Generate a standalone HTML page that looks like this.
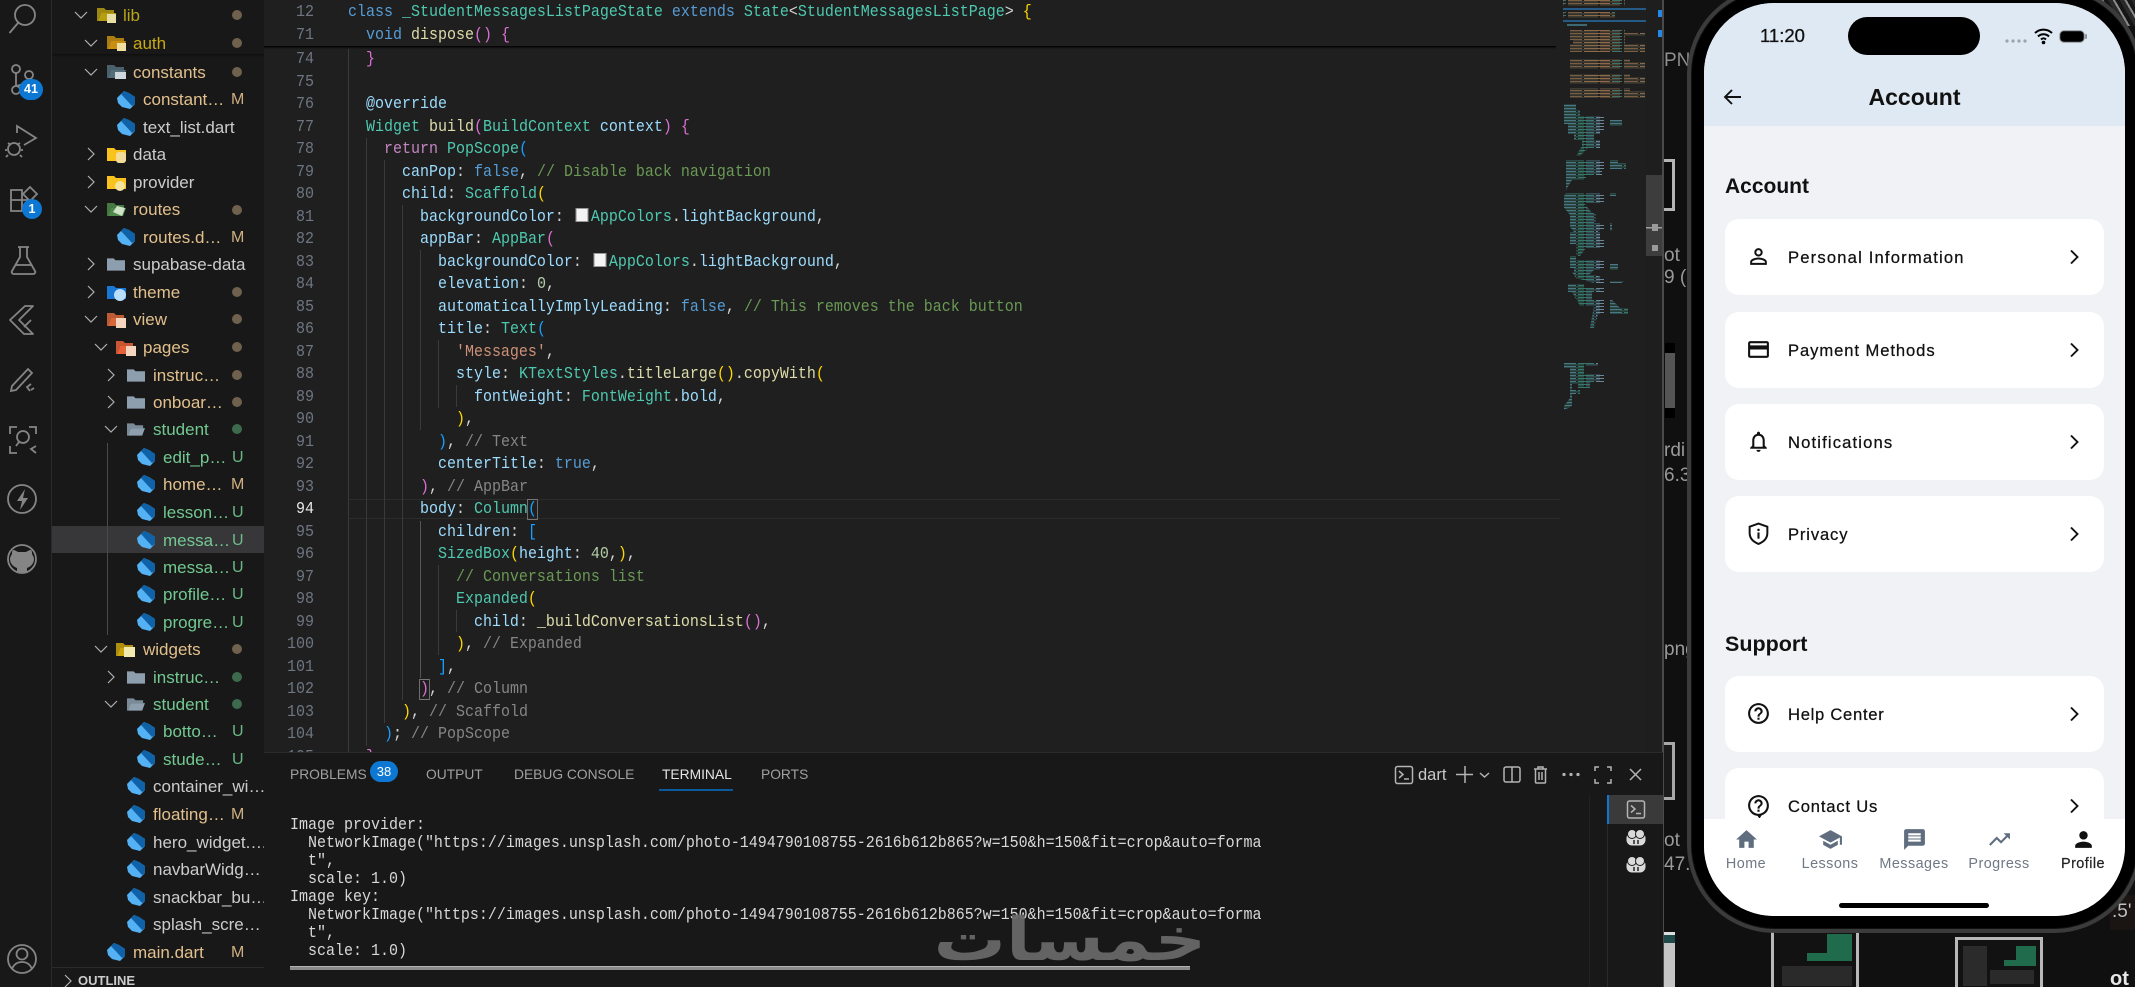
<!DOCTYPE html>
<html lang="en"><head><meta charset="utf-8"><title>Account</title>
<style>
*{box-sizing:border-box}
html,body{margin:0;padding:0;width:2135px;height:987px;overflow:hidden;background:#101010;font-family:"Liberation Sans",sans-serif}
#root{position:relative;width:2135px;height:987px;overflow:hidden;background:#101010}
.abs{position:absolute}
#side{position:absolute;left:0;top:0;width:264px;height:987px;background:#181818}
#act{position:absolute;left:0;top:0;width:52px;height:987px;background:#181818;border-right:1px solid #2a2a2a}
.t{position:absolute;font-size:17px;line-height:28px;height:28px;white-space:pre;color:#cccccc;margin-top:1px}
.y{color:#e2c08d}.g{color:#73c991}.o{color:#b9a416}
.b{position:absolute;left:231px;font-size:16px;line-height:28px;height:28px;margin-top:1px;opacity:.9}
.d{position:absolute;left:232px;width:10px;height:10px;border-radius:50%}
.dm{background:#6f614d}.du{background:#3d6a4c}
#sel{position:absolute;left:52px;top:526px;width:212px;height:27px;background:#37373a}
#ed{position:absolute;left:264px;top:0;width:1399px;height:752px;background:#1f1f1f;overflow:hidden}
.mono{font-family:"Liberation Mono",monospace;font-size:16.67px;white-space:pre;transform-origin:0 0;transform:scaleX(.9)}
.ln{position:absolute;left:0;width:50px;margin-top:1.5px;text-align:right;color:#6e7681;font-family:"Liberation Mono",monospace;font-size:16.67px;line-height:22.5px;height:22.5px;transform-origin:100% 0;transform:scaleX(.9)}
#code{position:absolute;left:84px;top:49.25px;color:#d4d4d4;line-height:22.5px;white-space:normal}
#code div{height:22.5px;white-space:pre}
.k{color:#569cd6}.c{color:#4ec9b0}.f{color:#dcdcaa}.p{color:#9cdcfe}.m{color:#6a9955}.s{color:#ce9178}.n{color:#b5cea8}.r{color:#c586c0}
.bg{color:#ffd700}.bp{color:#da70d6}.bb{color:#179fff}.dim{color:#858585}
.gd{position:absolute;width:1px;background:#3a3a3a}
.sw{display:inline-block;width:14px;height:14px;background:#f4f4f4;border:1px solid #999;margin:0 3px 0 3px;vertical-align:-1px}
#pn{position:absolute;left:264px;top:752px;width:1399px;height:235px;background:#181818;border-top:1px solid #2b2b2b}
.tab{position:absolute;top:13px;font-size:13.8px;line-height:18px;color:#a0a0a0}
#term{position:absolute;left:26px;top:64px;color:#d8d8d8;line-height:18px;white-space:normal}
#term div{height:18px;white-space:pre}
#phone{position:absolute;left:1687px;top:-14px;width:455px;height:947px;border-radius:88px;background:#000;border:4px solid #3b3b3b;box-shadow:inset 0 0 0 1px #111}
#scr{position:absolute;left:1704px;top:3px;width:421px;height:913px;border-radius:70px;background:#f0f2f6;overflow:hidden}
#hd{position:absolute;left:0;top:0;width:421px;height:123px;background:#dfe9f3}
.card{position:absolute;left:21px;width:379px;height:76px;background:#fff;border-radius:14px}
.lb{position:absolute;left:64px;top:1px;line-height:76px;font-size:16.6px;color:#111;white-space:pre;-webkit-text-stroke:.25px #111}
.ic{position:absolute;left:21px;top:25px;width:25px;height:25px;fill:#111}
.ch{position:absolute;left:344px;top:30px;width:10px;height:16px;fill:none;stroke:#111;stroke-width:1.9}
.h{position:absolute;left:21px;font-weight:bold;color:#111;line-height:30px;white-space:pre}
#nav{position:absolute;left:0;top:816px;width:421px;height:97px;background:#fff}
.ni{position:absolute;top:8px;width:25px;height:25px;fill:#5f6d7f}
.nl{position:absolute;top:35px;width:90px;text-align:center;font-size:14.4px;line-height:20px;color:#6f7884;letter-spacing:.45px}
.dw{font-size:19px;line-height:24px;color:#9a9a9a;position:absolute;white-space:pre}
.th{position:absolute;background:#121212;border:3px solid #b8b8b8}
</style></head><body><div id="root">

<!-- desktop remnants -->
<div class="dw" style="left:1664px;top:49px;color:#8f8f8f">PNG</div>
<div class="abs" style="left:1664px;top:159px;width:11px;height:52px;background:#0c0c0c;border:3px solid #b5b5b5;border-left:0"></div>
<div class="dw" style="left:1664px;top:244px">ot</div>
<div class="dw" style="left:1664px;top:266px">9 (</div>
<div class="abs" style="left:1665px;top:345px;width:10px;height:72px;background:#555"></div>
<div class="abs" style="left:1665px;top:343px;width:10px;height:10px;background:#000"></div>
<div class="abs" style="left:1665px;top:408px;width:10px;height:10px;background:#000"></div>
<div class="dw" style="left:1664px;top:439px">rdi</div>
<div class="dw" style="left:1664px;top:464px">6.3</div>
<div class="dw" style="left:1664px;top:638px">png</div>
<div class="abs" style="left:1664px;top:742px;width:11px;height:58px;background:#1a1a1a;border:3px solid #a8a8a8;border-left:0"></div>
<div class="dw" style="left:1664px;top:829px">ot</div>
<div class="dw" style="left:1664px;top:853px">47.2</div>
<div class="abs" style="left:1664px;top:932px;width:11px;height:55px;background:#c4c4c4;border-top:3px solid #ddd"></div>
<div class="abs" style="left:1664px;top:935px;width:11px;height:8px;background:#1e4a4a"></div>

<!-- bottom thumbnails -->
<div class="th" style="left:1771px;top:925px;width:88px;height:70px">
 <div class="abs" style="left:53px;top:6px;width:25px;height:27px;background:#1f6b4c"></div>
 <div class="abs" style="left:33px;top:25px;width:45px;height:8px;background:#1f6b4c"></div>
 <div class="abs" style="left:8px;top:38px;width:70px;height:20px;background:#2a2a2a"></div>
</div>
<div class="th" style="left:1955px;top:937px;width:88px;height:60px">
 <div class="abs" style="left:58px;top:6px;width:20px;height:14px;background:#1f6b4c"></div>
 <div class="abs" style="left:46px;top:20px;width:32px;height:6px;background:#1f6b4c"></div>
 <div class="abs" style="left:5px;top:6px;width:24px;height:40px;background:#2b2b2b"></div>
 <div class="abs" style="left:32px;top:30px;width:44px;height:14px;background:#2a2a2a"></div>
</div>
<div class="abs" style="left:2110px;top:895px;width:25px;height:35px;background:#1a1412"></div>
<div class="dw" style="left:2112px;top:900px;color:#c0c0c0">.5'</div>
<div class="dw" style="left:2110px;top:967px;color:#e8e8e8;font-weight:bold;font-size:20px">ot</div>
<div class="abs" style="left:2100px;top:0;width:35px;height:26px;background:repeating-linear-gradient(60deg,#2a2a2a 0 4px,#8a8a8a 4px 6px,#161616 6px 10px)"></div>

<!-- sidebar -->
<div id="side"></div>
<div id="sel"></div>
<div class="abs" style="left:52px;top:967px;width:212px;height:1px;background:#2b2b2b"></div>
<div class="abs" style="left:52px;top:54px;width:212px;height:3px;background:linear-gradient(#0e0e0e,#181818)"></div>
<div class="abs" style="left:107px;top:443px;width:1px;height:192px;background:#4a4a4a"></div>
<div id="act"></div>

<svg class="abs" style="left:0;top:0" width="264" height="987" viewBox="0 0 264 987">
<defs>
<symbol id="cd" viewBox="0 0 14 14"><path d="M1 4l6 6 6-6" fill="none" stroke="#b0b0b0" stroke-width="1.2"/></symbol>
<symbol id="cr" viewBox="0 0 14 14"><path d="M4 1l6 6-6 6" fill="none" stroke="#b0b0b0" stroke-width="1.2"/></symbol>
<symbol id="da" viewBox="0 0 18 18"><path d="M7 0L0 7l1 5 4 4 8 2 5-5V6L12 2z" fill="#54b1f4"/><path d="M7 0L4 3l11 12 3-2V6L12 2z" fill="#0f62a8"/></symbol>
<symbol id="fc" viewBox="0 0 19 15"><path d="M0 1h7l2 2h10v11H0z"/></symbol>
<symbol id="fo" viewBox="0 0 19 15"><path d="M0 1h7l2 2h8v3H4L1 14H0z" opacity=".85"/><path d="M4 6h15l-3 8H1z"/></symbol>
</defs>
<g fill="none" stroke="#858585" stroke-width="1.8">
<circle cx="25" cy="15" r="10"/><path d="M18 23l-8.500 10"/>
<circle cx="16" cy="69" r="4"/><circle cx="29" cy="75" r="4"/><circle cx="16" cy="90" r="4"/><path d="M16 73v13M29 79c0 6-9 5-12 7"/>
<path d="M17 133v-7l19 12-12 7"/><circle cx="14" cy="149" r="6"/><path d="M8 143l3 2M20 143l-3 2M7 150H5M21 150h2M8 155l-2 2M20 155l2 2"/>
<path d="M11 190h11v21H11zM11 200h22v11H22"/><path d="M30 187l7 7-7 7-7-7z"/>
<path d="M18 247h11M20 247v10l-8 14a2 2 0 0 0 2 3h19a2 2 0 0 0 2-3l-8-14v-10M15 265h17"/>
<path d="M25 306L10 320l14 14h9l-14-14 14-14h-8zM24 327l7-7" stroke-linejoin="round"/>
<path d="M12 386l16-17 4 4-16 17-5 1zM31 384l-4 3 3 4M34 388l-3 2"/>
<path d="M10 434v-7h7M29 427h7v7M10 446v7h7M36 446l-5 3 5 4"/><circle cx="23" cy="437" r="6"/><path d="M19 442l-3 4"/>
<circle cx="22" cy="499" r="14"/>
<circle cx="22" cy="559" r="14"/>
<circle cx="22" cy="959" r="14"/><circle cx="22" cy="954" r="5.500"/><path d="M12 969c2-5 6-7 10-7s8 2 10 7"/>
</g>
<path d="M25 489l-8 12h5l-2 9 8-12h-5z" fill="#858585"/>
<path d="M17 572v-4c-3-1-7-4-7-9 0-2 1-3 2-5 0-2 0-3 1-4 2 0 3 1 5 2h8c2-1 3-2 5-2 1 1 1 2 1 4 1 2 2 3 2 5 0 5-4 8-7 9v4z" fill="#858585"/>
<rect x="19" y="79" width="24" height="21" rx="10.500" fill="#0d78d4"/>
<circle cx="32" cy="209" r="10" fill="#0d78d4"/>
<use href="#cd" x="74" y="8" width="14" height="14"/>
<use href="#cd" x="84" y="36" width="14" height="14"/>
<use href="#cd" x="84" y="65" width="14" height="14"/>
<use href="#cr" x="84" y="147" width="14" height="14"/>
<use href="#cr" x="84" y="175" width="14" height="14"/>
<use href="#cd" x="84" y="202" width="14" height="14"/>
<use href="#cr" x="84" y="257" width="14" height="14"/>
<use href="#cr" x="84" y="285" width="14" height="14"/>
<use href="#cd" x="84" y="312" width="14" height="14"/>
<use href="#cd" x="94" y="340" width="14" height="14"/>
<use href="#cr" x="104" y="368" width="14" height="14"/>
<use href="#cr" x="104" y="395" width="14" height="14"/>
<use href="#cd" x="104" y="422" width="14" height="14"/>
<use href="#cd" x="94" y="642" width="14" height="14"/>
<use href="#cr" x="104" y="670" width="14" height="14"/>
<use href="#cd" x="104" y="697" width="14" height="14"/>
<use href="#cr" x="61" y="974" width="14" height="14"/>
<use href="#fo" x="97" y="7" width="19" height="15" fill="#b59e10"/><rect x="107" y="14" width="9" height="9" fill="#e8dfa8"/>
<use href="#fo" x="107" y="35" width="19" height="15" fill="#c98f12"/><rect x="117" y="43" width="9" height="8" fill="#f0dfa0"/>
<use href="#fo" x="107" y="64" width="19" height="15" fill="#546e7a"/><rect x="115" y="72" width="11" height="7" fill="#cfd8dc"/>
<use href="#fc" x="107" y="147" width="19" height="15" fill="#f9c21d"/><rect x="116" y="152" width="10" height="11" rx="3" fill="#f3dc9a"/>
<use href="#fc" x="107" y="175" width="19" height="15" fill="#f9c21d"/><circle cx="120" cy="186" r="5" fill="#f3e4a0"/>
<use href="#fo" x="107" y="202" width="19" height="15" fill="#4f8a4c"/><path d="M113 212l4-6 8 2-3 8z" fill="#cfe3c8"/>
<use href="#fc" x="107" y="257" width="18" height="15" fill="#8d9fae"/>
<use href="#fc" x="107" y="285" width="19" height="15" fill="#1976d2"/><circle cx="120" cy="295" r="6" fill="#bbdefb"/>
<use href="#fo" x="107" y="312" width="19" height="15" fill="#d9673a"/><rect x="116" y="318" width="10" height="10" fill="#f5d5bd"/>
<use href="#fo" x="116" y="340" width="19" height="15" fill="#e8613a"/><rect x="126" y="346" width="10" height="10" fill="#f5d5bd"/>
<use href="#fc" x="127" y="368" width="18" height="15" fill="#8d9fae"/>
<use href="#fc" x="127" y="395" width="18" height="15" fill="#8d9fae"/>
<use href="#fo" x="127" y="422" width="18" height="15" fill="#8d9fae"/>
<use href="#fo" x="116" y="642" width="19" height="15" fill="#c9a40d"/><rect x="124" y="647" width="11" height="10" fill="#f3eab0"/>
<use href="#fc" x="127" y="670" width="18" height="15" fill="#8d9fae"/>
<use href="#fo" x="127" y="697" width="18" height="15" fill="#8d9fae"/>
<use href="#da" x="117" y="91" width="18" height="18"/>
<use href="#da" x="117" y="118" width="18" height="18"/>
<use href="#da" x="117" y="228" width="18" height="18"/>
<use href="#da" x="137" y="448" width="18" height="18"/>
<use href="#da" x="137" y="475" width="18" height="18"/>
<use href="#da" x="137" y="503" width="18" height="18"/>
<use href="#da" x="137" y="531" width="18" height="18"/>
<use href="#da" x="137" y="558" width="18" height="18"/>
<use href="#da" x="137" y="585" width="18" height="18"/>
<use href="#da" x="137" y="613" width="18" height="18"/>
<use href="#da" x="137" y="722" width="18" height="18"/>
<use href="#da" x="137" y="750" width="18" height="18"/>
<use href="#da" x="127" y="777" width="18" height="18"/>
<use href="#da" x="127" y="805" width="18" height="18"/>
<use href="#da" x="127" y="833" width="18" height="18"/>
<use href="#da" x="127" y="860" width="18" height="18"/>
<use href="#da" x="127" y="888" width="18" height="18"/>
<use href="#da" x="127" y="915" width="18" height="18"/>
<use href="#da" x="107" y="943" width="18" height="18"/>
</svg>
<div class="abs" style="left:19px;top:79px;width:24px;height:21px;line-height:21px;text-align:center;color:#fff;font-size:12.5px;font-weight:bold">41</div>
<div class="abs" style="left:22px;top:199px;width:20px;height:20px;line-height:20px;text-align:center;color:#fff;font-size:12.5px;font-weight:bold">1</div>

<div class="t o" style="left:123px;top:1px">lib</div><div class="d dm" style="top:10px"></div>
<div class="t o" style="left:133px;top:29px;color:#c9aa14">auth</div><div class="d dm" style="top:38px"></div>
<div class="t y" style="left:133px;top:58px">constants</div><div class="d dm" style="top:67px"></div>
<div class="t y" style="left:143px;top:85px">constant…</div><div class="b y" style="top:85px">M</div>
<div class="t" style="left:143px;top:113px">text_list.dart</div>
<div class="t" style="left:133px;top:140px">data</div>
<div class="t" style="left:133px;top:168px">provider</div>
<div class="t y" style="left:133px;top:195px">routes</div><div class="d dm" style="top:205px"></div>
<div class="t y" style="left:143px;top:223px">routes.d…</div><div class="b y" style="top:223px">M</div>
<div class="t" style="left:133px;top:250px">supabase-data</div>
<div class="t y" style="left:133px;top:278px">theme</div><div class="d dm" style="top:287px"></div>
<div class="t y" style="left:133px;top:305px">view</div><div class="d dm" style="top:314px"></div>
<div class="t y" style="left:143px;top:333px">pages</div><div class="d dm" style="top:342px"></div>
<div class="t y" style="left:153px;top:361px">instruc…</div><div class="d dm" style="top:370px"></div>
<div class="t y" style="left:153px;top:388px">onboar…</div><div class="d dm" style="top:397px"></div>
<div class="t g" style="left:153px;top:415px">student</div><div class="d du" style="top:424px"></div>
<div class="t g" style="left:163px;top:443px">edit_p…</div><div class="b g" style="top:443px;left:232px">U</div>
<div class="t y" style="left:163px;top:470px">home…</div><div class="b y" style="top:470px">M</div>
<div class="t g" style="left:163px;top:498px">lesson…</div><div class="b g" style="top:498px;left:232px">U</div>
<div class="t g" style="left:163px;top:526px">messa…</div><div class="b g" style="top:526px;left:232px">U</div>
<div class="t g" style="left:163px;top:553px">messa…</div><div class="b g" style="top:553px;left:232px">U</div>
<div class="t g" style="left:163px;top:580px">profile…</div><div class="b g" style="top:580px;left:232px">U</div>
<div class="t g" style="left:163px;top:608px">progre…</div><div class="b g" style="top:608px;left:232px">U</div>
<div class="t y" style="left:143px;top:635px">widgets</div><div class="d dm" style="top:644px"></div>
<div class="t g" style="left:153px;top:663px">instruc…</div><div class="d du" style="top:672px"></div>
<div class="t g" style="left:153px;top:690px">student</div><div class="d du" style="top:699px"></div>
<div class="t g" style="left:163px;top:717px">botto…</div><div class="b g" style="top:717px;left:232px">U</div>
<div class="t g" style="left:163px;top:745px">stude…</div><div class="b g" style="top:745px;left:232px">U</div>
<div class="t" style="left:153px;top:772px">container_wi…</div>
<div class="t y" style="left:153px;top:800px">floating…</div><div class="b y" style="top:800px">M</div>
<div class="t" style="left:153px;top:828px">hero_widget.…</div>
<div class="t" style="left:153px;top:855px">navbarWidg…</div>
<div class="t" style="left:153px;top:883px">snackbar_bu…</div>
<div class="t" style="left:153px;top:910px">splash_scre…</div>
<div class="t y" style="left:133px;top:938px">main.dart</div><div class="b y" style="top:938px">M</div>
<div class="abs" style="left:78px;top:972px;font-size:13px;font-weight:bold;color:#ccc;line-height:18px">OUTLINE</div>

<!-- editor -->
<div id="ed">
 <div class="abs" style="left:84px;top:499px;width:1212px;height:20px;border-top:1px solid #2c2c2c;border-bottom:1px solid #2c2c2c"></div>
 <i class="gd" style="left:84px;top:47px;height:705px"></i>
 <i class="gd" style="left:102px;top:138px;height:608px"></i>
 <i class="gd" style="left:120px;top:160px;height:563px"></i>
 <i class="gd" style="left:138px;top:205px;height:495px"></i>
 <i class="gd" style="left:156px;top:250px;height:180px"></i>
 <i class="gd" style="left:156px;top:521px;height:157px;background:#555"></i>
 <i class="gd" style="left:174px;top:340px;height:68px"></i>
 <i class="gd" style="left:174px;top:565px;height:90px"></i>
 <i class="gd" style="left:192px;top:385px;height:22px"></i>
 <i class="gd" style="left:192px;top:610px;height:22px"></i>

 <div class="ln" style="top:47.75px">74</div><div class="ln" style="top:70.25px">75</div><div class="ln" style="top:92.75px">76</div><div class="ln" style="top:115.25px">77</div><div class="ln" style="top:137.75px">78</div><div class="ln" style="top:160.25px">79</div><div class="ln" style="top:182.75px">80</div><div class="ln" style="top:205.25px">81</div><div class="ln" style="top:227.75px">82</div><div class="ln" style="top:250.25px">83</div><div class="ln" style="top:272.75px">84</div><div class="ln" style="top:295.25px">85</div><div class="ln" style="top:317.75px">86</div><div class="ln" style="top:340.25px">87</div><div class="ln" style="top:362.75px">88</div><div class="ln" style="top:385.25px">89</div><div class="ln" style="top:407.75px">90</div><div class="ln" style="top:430.25px">91</div><div class="ln" style="top:452.75px">92</div><div class="ln" style="top:475.25px">93</div><div class="ln" style="top:497.75px;color:#e8e8e8">94</div><div class="ln" style="top:520.25px">95</div><div class="ln" style="top:542.75px">96</div><div class="ln" style="top:565.25px">97</div><div class="ln" style="top:587.75px">98</div><div class="ln" style="top:610.25px">99</div><div class="ln" style="top:632.75px">100</div><div class="ln" style="top:655.25px">101</div><div class="ln" style="top:677.75px">102</div><div class="ln" style="top:700.25px">103</div><div class="ln" style="top:722.75px">104</div><div class="ln" style="top:745.25px">105</div>

 <div id="code" class="mono">
<div>  <span class="bp">}</span></div>
<div> </div>
<div>  <span class="p">@override</span></div>
<div>  <span class="c">Widget</span> <span class="f">build</span><span class="bp">(</span><span class="c">BuildContext</span> <span class="p">context</span><span class="bp">)</span> <span class="bp">{</span></div>
<div>    <span class="r">return</span> <span class="c">PopScope</span><span class="bb">(</span></div>
<div>      <span class="p">canPop</span>: <span class="k">false</span>, <span class="m">// Disable back navigation</span></div>
<div>      <span class="p">child</span>: <span class="c">Scaffold</span><span class="bg">(</span></div>
<div>        <span class="p">backgroundColor</span>: <span class="sw"></span><span class="c">AppColors</span>.<span class="p">lightBackground</span>,</div>
<div>        <span class="p">appBar</span>: <span class="c">AppBar</span><span class="bp">(</span></div>
<div>          <span class="p">backgroundColor</span>: <span class="sw"></span><span class="c">AppColors</span>.<span class="p">lightBackground</span>,</div>
<div>          <span class="p">elevation</span>: <span class="n">0</span>,</div>
<div>          <span class="p">automaticallyImplyLeading</span>: <span class="k">false</span>, <span class="m">// This removes the back button</span></div>
<div>          <span class="p">title</span>: <span class="c">Text</span><span class="bb">(</span></div>
<div>            <span class="s">'Messages'</span>,</div>
<div>            <span class="p">style</span>: <span class="c">KTextStyles</span>.<span class="f">titleLarge</span><span class="bg">()</span>.<span class="f">copyWith</span><span class="bg">(</span></div>
<div>              <span class="p">fontWeight</span>: <span class="c">FontWeight</span>.<span class="p">bold</span>,</div>
<div>            <span class="bg">)</span>,</div>
<div>          <span class="bb">)</span>, <span class="dim">// Text</span></div>
<div>          <span class="p">centerTitle</span>: <span class="k">true</span>,</div>
<div>        <span class="bp">)</span>, <span class="dim">// AppBar</span></div>
<div>        <span class="p">body</span>: <span class="c">Column</span><span class="bb" style="outline:1px solid #777">(</span></div>
<div>          <span class="p">children</span>: <span class="bb">[</span></div>
<div>          <span class="c">SizedBox</span><span class="bg">(</span><span class="p">height</span>: <span class="n">40</span>,<span class="bg">)</span>,</div>
<div>            <span class="m">// Conversations list</span></div>
<div>            <span class="c">Expanded</span><span class="bg">(</span></div>
<div>              <span class="p">child</span>: <span class="f">_buildConversationsList</span><span class="bp">()</span>,</div>
<div>            <span class="bg">)</span>, <span class="dim">// Expanded</span></div>
<div>          <span class="bb">]</span>,</div>
<div>        <span class="bp" style="outline:1px solid #777">)</span>, <span class="dim">// Column</span></div>
<div>      <span class="bg">)</span>, <span class="dim">// Scaffold</span></div>
<div>    <span class="bb">)</span>; <span class="dim">// PopScope</span></div>
<div>  <span class="bp">}</span></div>
 </div>
 <!-- sticky -->
 <div class="abs" style="left:0;top:0;width:1292px;height:46px;background:#1f1f1f"></div>
 <div class="abs" style="left:0;top:46px;width:1292px;height:3px;background:linear-gradient(#000,#1f1f1f)"></div>
 <div class="ln" style="top:0">12</div><div class="ln" style="top:23px">71</div>
 <div class="abs mono" style="left:84px;top:1.5px;line-height:22.5px;color:#d4d4d4"><span class="k">class</span> <span class="c">_StudentMessagesListPageState</span> <span class="k">extends</span> <span class="c">State</span>&lt;<span class="c">StudentMessagesListPage</span>&gt; <span class="bg">{</span></div>
 <div class="abs mono" style="left:84px;top:24.5px;line-height:22.5px;color:#d4d4d4">  <span class="k">void</span> <span class="f">dispose</span><span class="bp">()</span> <span class="bp">{</span></div>

 <!-- minimap -->
 <svg class="abs" style="left:1292px;top:0" width="107" height="752" viewBox="1556 0 107 752">
 <defs>
 <pattern id="m1" width="56" height="3" patternUnits="userSpaceOnUse"><rect width="14" height="1" fill="#7a5e44"/><rect x="16" width="26" height="1" fill="#8a6a48"/><rect x="44" width="10" height="1" fill="#3f7366"/><rect y="1.500" width="30" height=".8" fill="#5d5a46"/><rect x="32" y="1.500" width="20" height=".8" fill="#7a5e44"/></pattern>
 <pattern id="m2" width="46" height="3" patternUnits="userSpaceOnUse"><rect width="12" height="1" fill="#4c7588"/><rect x="14" width="16" height="1" fill="#35796b"/><rect x="32" width="8" height="1" fill="#6a8798"/><rect y="1.500" width="20" height=".8" fill="#35796b"/><rect x="22" y="1.500" width="14" height=".8" fill="#4c7588"/></pattern>
 </defs>
 <rect x="1563" y="0" width="62" height="6" fill="url(#m1)"/>
 <rect x="1563" y="8" width="83" height="2" fill="#265a86"/>
 <rect x="1563" y="12" width="52" height="6" fill="url(#m1)"/>
 <rect x="1563" y="20" width="83" height="2" fill="#265a86"/>
 <rect x="1567" y="24" width="20" height="2" fill="#3d6a72"/>
 <path d="M1570 30h55v3h20v3h-20v10h-52v-6h-3zM1570 44h75v8h-75zM1570 59h60v3h15v7h-75zM1570 74h60v3h15v7h-75zM1570 88h60v3h15v7h-75z" fill="url(#m1)"/>
 <path d="M1564 104h12v6h4v6h28v4h14v6h-14v4h-8v4h-6v6h6v8h-12l-8 8h-4l6-10v-6h-8v-6h-6v-10h-4z" fill="url(#m2)"/>
 <path d="M1566 160h52v3h8v6h-24v6h-16v5h-14l-6 10zM1566 172h20v6h-20z" fill="url(#m2)"/>
 <path d="M1566 193h50v3h-8v7h-24l8 10h4v10h16v8h-14v6h-20l-8-10v-12l-8-10v-6zM1570 232h30v6h6v10h-20l-6 8h-4v-12h-6z" fill="url(#m2)"/>
 <path d="M1570 256h6v4h32v4h10v6h-24l-6 6h-14v-8h-4zM1572 272h14v3h10l14 6h14v2h-30l-18-5zM1568 284h16v4h22v4h-14v8h20l8 8h8v6h-30l-4 14h-4l4-22h-14l-8-14h-4z" fill="url(#m2)"/>
 <path d="M1564 363h34v3h-14v8h20v8h-14v6h-12v-4h-6v6h8v4h-8v12l-8 4v-4l6-8v-30h-6z" fill="url(#m2)"/>
 <rect x="1646" y="0" width="17" height="752" fill="#1e1e1e"/>
 <rect x="1646" y="175" width="17" height="81" fill="#3d3d3d"/>
 <rect x="1646" y="227" width="17" height="1.500" fill="#a0a0a0"/>
 <rect x="1652" y="224" width="6" height="7" fill="#9a9a9a"/><rect x="1652" y="245" width="6" height="6" fill="#9a9a9a"/>
 <rect x="1658" y="10" width="5" height="7" fill="#2388e6"/><rect x="1658" y="30" width="5" height="7" fill="#2388e6"/>
 </svg>
</div>
<div class="abs" style="left:1662px;top:0;width:2px;height:987px;background:#4a4a4a"></div>

<!-- panel -->
<div id="pn">
 <div class="tab" style="left:26px">PROBLEMS</div>
 <div class="abs" style="left:106px;top:8px;width:28px;height:21px;border-radius:11px;background:#0d78d4;color:#fff;font-size:13px;line-height:21px;text-align:center">38</div>
 <div class="tab" style="left:162px">OUTPUT</div>
 <div class="tab" style="left:250px">DEBUG CONSOLE</div>
 <div class="tab" style="left:398px;color:#e4e4e4">TERMINAL</div>
 <div class="abs" style="left:395px;top:36px;width:74px;height:1px;background:#0b5a9e;box-shadow:0 1px 0 #0b5a9e"></div>
 <div class="tab" style="left:497px">PORTS</div>

 <div id="term" class="mono">
<div>Image provider:</div>
<div>  NetworkImage("https://images.unsplash.com/photo-1494790108755-2616b612b865?w=150&amp;h=150&amp;fit=crop&amp;auto=forma</div>
<div>  t",</div>
<div>  scale: 1.0)</div>
<div>Image key:</div>
<div>  NetworkImage("https://images.unsplash.com/photo-1494790108755-2616b612b865?w=150&amp;h=150&amp;fit=crop&amp;auto=forma</div>
<div>  t",</div>
<div>  scale: 1.0)</div>
 </div>
 <div class="abs" style="left:26px;top:213px;width:900px;height:4px;background:#8a8a8a;border-top:1px solid #b5b5b5"></div>
 <div class="abs" style="left:676px;top:157px;width:260px;height:60px;line-height:60px;text-align:center;font-family:'DejaVu Sans',sans-serif;font-weight:bold;font-size:60px;color:#6a6a6a;opacity:.92;transform:scaleX(1.2)">خمسات</div>

 <div class="abs" style="left:1325px;top:42px;width:1px;height:193px;background:#222"></div>
 <div class="abs" style="left:1343px;top:42px;width:1px;height:193px;background:#2b2b2b"></div>
 <div class="abs" style="left:1343px;top:42px;width:56px;height:29px;background:#3a3a3a;border-left:2px solid #0d78d4"></div>

 <svg class="abs" style="left:1116px;top:0" width="283" height="130" viewBox="1380 752 283 130" fill="none" stroke="#b4b4b4" stroke-width="1.500">
  <rect x="1395.500" y="765.500" width="17" height="17" rx="2"/><path d="M1399 770l4 3.500-4 3.500M1404 778h5"/>
  <path d="M1465 765v17M1456 773.500h17" />
  <path d="M1480 772l4.500 4 4.500-4"/>
  <rect x="1504" y="766" width="16" height="15" rx="2"/><path d="M1512 766v15"/>
  <path d="M1534 768h13M1538 768v-2h5v2M1535.500 768v13a1 1 0 0 0 1 1h8a1 1 0 0 0 1-1v-13M1539 771v8M1542 771v8"/>
  <path d="M1595 770v-4h4M1607 766h4v4M1595 778v4h4M1611 778v4h-4"/>
  <path d="M1630 768l11 11M1641 768l-11 11"/>
  <rect x="1627.500" y="800" width="17" height="17" rx="2"/><path d="M1631 804.500l4 3.500-4 3.500M1636 812.500h5"/>
  <g fill="#d9d9d9" stroke="#181818" stroke-width="1"><rect x="1626" y="831" width="20" height="14" rx="6"/><circle cx="1632" cy="833" r="4.500"/><circle cx="1640" cy="833" r="4.500"/><path d="M1634 839v4M1638 839v4" stroke="#222" stroke-width="1.500"/></g>
  <g fill="#d9d9d9" stroke="#181818" stroke-width="1"><rect x="1626" y="858" width="20" height="14" rx="6"/><circle cx="1632" cy="860" r="4.500"/><circle cx="1640" cy="860" r="4.500"/><path d="M1634 866v4M1638 866v4" stroke="#222" stroke-width="1.500"/></g>
  <circle cx="1564" cy="773.500" r=".9" fill="#c4c4c4"/><circle cx="1571" cy="773.500" r=".9" fill="#c4c4c4"/><circle cx="1578" cy="773.500" r=".9" fill="#c4c4c4"/>
 </svg>
 <div class="abs" style="left:1154px;top:12px;font-size:16.5px;line-height:20px;color:#c8c8c8">dart</div>
</div>

<!-- phone -->
<div id="phone"></div>
<div id="scr">
 <div id="hd"></div>
 <div class="abs" style="left:56px;top:22px;font-size:18.5px;line-height:22px;color:#111;-webkit-text-stroke:.3px #111">11:20</div>
 <div class="abs" style="left:144px;top:14px;width:132px;height:38px;border-radius:19px;background:#000"></div>
 <svg class="abs" style="left:300px;top:24px" width="90" height="20" viewBox="0 0 90 20">
  <g fill="#9aa4ae"><circle cx="3" cy="14" r="1.600"/><circle cx="9" cy="14" r="1.600"/><circle cx="15" cy="14" r="1.600"/><circle cx="21" cy="14" r="1.600"/></g>
  <path d="M31 6c5-4.500 12-4.500 17 0M34 9.500c3-3 8-3 11 0M37 12.500c1.500-1.500 3.500-1.500 5 0" fill="none" stroke="#000" stroke-width="2"/><circle cx="39.500" cy="15.500" r="1.800"/>
  <rect x="55.800" y="3.800" width="24.400" height="11.400" rx="4" fill="#000" stroke="#8f9499" stroke-width="1"/><rect x="81" y="7" width="2" height="5" rx="1" fill="#8f9499"/>
 </svg>
 <svg class="abs" style="left:19px;top:85px" width="20" height="18" viewBox="0 0 20 18"><path d="M18 9H3M9 2L2 9l7 7" fill="none" stroke="#111" stroke-width="1.900"/></svg>
 <div class="abs" style="left:0;top:79px;width:421px;text-align:center;font-size:23px;font-weight:bold;line-height:30px;color:#111">Account</div>
 <div class="h" style="top:169px;font-size:21px">Account</div>

 <div class="card" style="top:216px"><svg class="ic" viewBox="0 0 24 24"><path d="M12 5.900c1.160 0 2.100.94 2.100 2.100s-.94 2.100-2.100 2.100S9.900 9.160 9.900 8s.94-2.100 2.100-2.100m0 9c2.970 0 6.100 1.460 6.100 2.100v1.100H5.900V17c0-.64 3.130-2.100 6.100-2.100M12 4C9.790 4 8 5.790 8 8s1.790 4 4 4 4-1.790 4-4-1.790-4-4-4zm0 9c-2.670 0-8 1.340-8 4v3h16v-3c0-2.660-5.330-4-8-4z"/></svg><div class="lb" style="left:63px;letter-spacing:1.18px">Personal Information</div><svg class="ch" viewBox="0 0 10 16"><path d="M2 1.500L8.500 8 2 14.500"/></svg></div>
 <div class="card" style="top:309px"><svg class="ic" viewBox="0 0 24 24"><path d="M20 4H4c-1.110 0-1.990.89-1.990 2L2 18c0 1.110.89 2 2 2h16c1.110 0 2-.89 2-2V6c0-1.110-.89-2-2-2zm0 14H4v-6h16v6zm0-10H4V6h16v2z"/></svg><div class="lb" style="left:63px;letter-spacing:.92px">Payment Methods</div><svg class="ch" viewBox="0 0 10 16"><path d="M2 1.500L8.500 8 2 14.500"/></svg></div>
 <div class="card" style="top:401px"><svg class="ic" viewBox="0 0 24 24"><path d="M12 22c1.100 0 2-.9 2-2h-4c0 1.100.9 2 2 2zm6-6v-5c0-3.070-1.630-5.640-4.500-6.320V4c0-.83-.67-1.500-1.500-1.500s-1.500.67-1.500 1.500v.68C7.640 5.360 6 7.920 6 11v5l-2 2v1h16v-1l-2-2zm-2 1H8v-6c0-2.480 1.510-4.500 4-4.500s4 2.020 4 4.500v6z"/></svg><div class="lb" style="left:63px;letter-spacing:1.15px">Notifications</div><svg class="ch" viewBox="0 0 10 16"><path d="M2 1.500L8.500 8 2 14.500"/></svg></div>
 <div class="card" style="top:493px"><svg class="ic" viewBox="0 0 24 24"><path d="M12 2.500l8.500 3v6c0 5-3.500 8.500-8.500 10.500-5-2-8.500-5.500-8.500-10.500v-6z" fill="none" stroke="#111" stroke-width="1.900"/><rect x="11" y="11" width="2" height="6"/><circle cx="12" cy="8.500" r="1.200"/></svg><div class="lb" style="left:63px;letter-spacing:.85px">Privacy</div><svg class="ch" viewBox="0 0 10 16"><path d="M2 1.500L8.500 8 2 14.500"/></svg></div>

 <div class="h" style="top:626px;font-size:21.5px">Support</div>

 <div class="card" style="top:673px"><svg class="ic" viewBox="0 0 24 24"><path d="M11 18h2v-2h-2v2zm1-16C6.480 2 2 6.480 2 12s4.480 10 10 10 10-4.480 10-10S17.520 2 12 2zm0 18c-4.410 0-8-3.590-8-8s3.590-8 8-8 8 3.590 8 8-3.590 8-8 8zm0-14c-2.210 0-4 1.790-4 4h2c0-1.100.9-2 2-2s2 .9 2 2c0 2-3 1.750-3 5h2c0-2.250 3-2.500 3-5 0-2.210-1.790-4-4-4z"/></svg><div class="lb" style="left:63px;letter-spacing:.72px">Help Center</div><svg class="ch" viewBox="0 0 10 16"><path d="M2 1.500L8.500 8 2 14.500"/></svg></div>
 <div class="card" style="top:765px"><svg class="ic" viewBox="0 0 24 24"><path d="M12 2C6.480 2 2 6.480 2 12c0 5.200 4 9.500 9 10l2 2.500 2-3c4.200-1.300 7-5 7-9.500 0-5.520-4.480-10-10-10zm0 2c4.410 0 8 3.590 8 8s-3.590 8-8 8-8-3.590-8-8 3.590-8 8-8zm-1 12h2v2h-2zm1-10c-2.210 0-4 1.790-4 4h2c0-1.100.9-2 2-2s2 .9 2 2c0 2-3 1.750-3 5h2c0-2.250 3-2.500 3-5 0-2.210-1.790-4-4-4z"/></svg><div class="lb" style="left:63px;letter-spacing:.8px">Contact Us</div><svg class="ch" viewBox="0 0 10 16"><path d="M2 1.500L8.500 8 2 14.500"/></svg></div>

 <div id="nav">
  <svg class="ni" style="left:30px" viewBox="0 0 24 24"><path d="M10 20v-6h4v6h5v-8h3L12 3 2 12h3v8z"/></svg>
  <svg class="ni" style="left:114px" viewBox="0 0 24 24"><path d="M5 13.180v4L12 21l7-3.820v-4L12 17l-7-3.820zM12 3L1 9l11 6 9-4.910V17h2V9L12 3z"/></svg>
  <svg class="ni" style="left:198px" viewBox="0 0 24 24"><path d="M20 2H4c-1.100 0-1.990.9-1.990 2L2 22l4-4h14c1.100 0 2-.9 2-2V4c0-1.100-.9-2-2-2zM6 14v-2h12v2H6zm0-3V9h12v2H6zm12-3H6V6h12v2z"/></svg>
  <svg class="ni" style="left:283px" viewBox="0 0 24 24"><path d="M16 6l2.290 2.290-4.880 4.880-4-4L2 16.590 3.410 18l6-6 4 4 6.300-6.290L22 12V6z"/></svg>
  <svg class="ni" style="left:367px;fill:#111" viewBox="0 0 24 24"><path d="M12 12c2.210 0 4-1.790 4-4s-1.790-4-4-4-4 1.790-4 4 1.790 4 4 4zm0 2c-2.670 0-8 1.340-8 4v2h16v-2c0-2.660-5.330-4-8-4z"/></svg>
  <div class="nl" style="left:-3px">Home</div>
  <div class="nl" style="left:81px">Lessons</div>
  <div class="nl" style="left:165px">Messages</div>
  <div class="nl" style="left:250px">Progress</div>
  <div class="nl" style="left:334px;color:#222;-webkit-text-stroke:.2px #222">Profile</div>
 </div>
 <div class="abs" style="left:135px;top:900px;width:150px;height:5px;border-radius:3px;background:#000"></div>
</div>
</div></body></html>
